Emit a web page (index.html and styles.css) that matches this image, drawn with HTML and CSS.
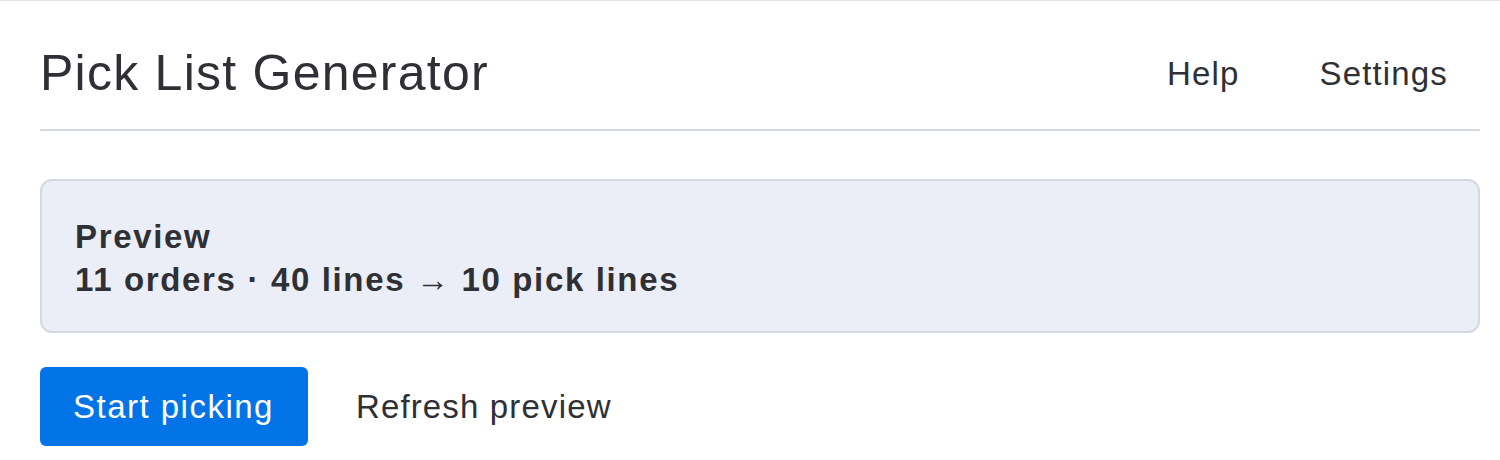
FILE: index.html
```html
<!DOCTYPE html>
<html lang="en">
<head>
<meta charset="utf-8">
<title>Pick List Generator</title>
<link rel="stylesheet" href="styles.css">
</head>
<body>
<div class="page">
  <header class="header">
    <h1 class="title">Pick List Generator</h1>
    <nav class="nav">
      <button class="link-btn" type="button">Help</button>
      <button class="link-btn" type="button">Settings</button>
    </nav>
  </header>
  <main class="main">
    <section class="preview">
      <div class="preview-title">Preview</div>
      <div class="preview-stats">11 orders · 40 lines → 10 pick lines</div>
    </section>
    <div class="actions">
      <button class="primary-btn" type="button">Start picking</button>
      <button class="link-btn" type="button">Refresh preview</button>
    </div>
  </main>
</div>
</body>
</html>
```

FILE: styles.css
```css
* { box-sizing: border-box; }

html, body {
  margin: 0;
  padding: 0;
  background: #ffffff;
}

body {
  border-top: 1px solid #e2e4e9;
  font-family: "Liberation Sans", Arial, sans-serif;
  color: #2e3035;
  font-size: 33px;
  letter-spacing: 0.035em;
}

.page {
  padding: 0 20px 0 40px;
}

.header {
  display: flex;
  align-items: center;
  justify-content: space-between;
  height: 130px;
  padding: 32px 0 16px;
  border-bottom: 2px solid #d4d8e3;
}

.title {
  margin: 0;
  font-size: 50px;
  font-weight: 400;
  letter-spacing: 0.025em;
  line-height: 1.2;
}

.nav {
  display: flex;
  gap: 16px;
}

.link-btn {
  font: inherit;
  letter-spacing: inherit;
  color: #2e3035;
  background: none;
  border: 0;
  padding: 18px 32px;
  line-height: 43px;
  cursor: pointer;
}

.nav .link-btn {
  padding-top: 0;
  padding-bottom: 0;
}

.main {
  padding-top: 48px;
}

.preview {
  background: #eceef7;
  border: 2px solid #d4d8e3;
  border-radius: 12px;
  padding: 34px 33px 30px;
  line-height: 43px;
  font-weight: 700;
  letter-spacing: 0.05em;
}

.actions {
  display: flex;
  align-items: center;
  gap: 16px;
  margin-top: 34px;
}

.primary-btn {
  font: inherit;
  letter-spacing: 0.045em;
  color: #ffffff;
  background: #0374e8;
  border: 0;
  border-radius: 6px;
  padding: 18px 34px 18px 33px;
  line-height: 43px;
  cursor: pointer;
}
```
